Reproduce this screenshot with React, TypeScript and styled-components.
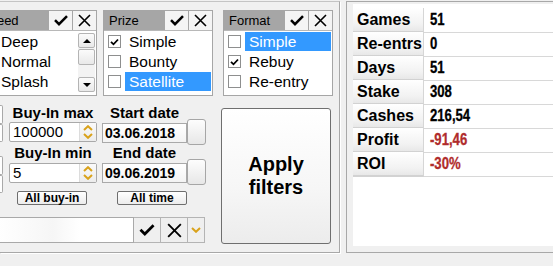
import React from 'react';
import styled, { createGlobalStyle } from 'styled-components';

const Global = createGlobalStyle`
  html, body { margin: 0; padding: 0; background: #f0f0f0; }
  body { width: 553px; height: 266px; overflow: hidden; font-family: "Liberation Sans", Arial, sans-serif; color: #000; }
`;

const Window = styled.div`
  display: flex;
  align-items: flex-start;
  width: 553px;
  height: 266px;
  overflow: hidden;
  background: #f0f0f0;
`;

const LeftGroup = styled.div`
  flex: none;
  box-sizing: border-box;
  width: 340px;
  height: 252px;
  margin-top: 1px;
  border-top: 1px solid #c4c4c4;
  border-right: 1px solid #a8a8a8;
  border-bottom: 1px solid #a8a8a8;
  box-shadow: 1px 1px 0 #fff;
  padding-top: 8px;
  display: flex;
  flex-direction: column;
`;

const TopRow = styled.div`
  display: flex;
  align-items: flex-start;
`;

const ListBox = styled.div<{ $w: number; $ml: number }>`
  flex: none;
  box-sizing: border-box;
  width: ${p => p.$w}px;
  height: 86px;
  margin-left: ${p => p.$ml}px;
  border: 1px solid #a6a6a6;
  background: #fff;
  display: flex;
  flex-direction: column;
`;

const BoxHeader = styled.div`
  display: flex;
  height: 19px;
  border-bottom: 1px solid #b8b8b8;
`;

const BoxTitle = styled.div`
  flex: 1;
  background: #a6a6a6;
  font-size: 13px;
  line-height: 19px;
  padding-left: 5px;
  white-space: nowrap;
  overflow: hidden;
`;

const HeaderBtn = styled.div`
  width: 24px;
  box-sizing: border-box;
  border-left: 1px solid #a6a6a6;
  background: #f4f4f4;
  display: flex;
  align-items: center;
  justify-content: center;
`;

const ListBody = styled.div`
  flex: 1;
  display: flex;
`;

const Items = styled.div`
  flex: 1;
  display: flex;
  flex-direction: column;
  min-width: 0;
`;

const Item = styled.div`
  height: 20px;
  display: flex;
  align-items: flex-start;
`;

const CheckBox = styled.div`
  flex: none;
  box-sizing: border-box;
  width: 13px;
  height: 13px;
  margin: 4px 0 0 4px;
  border: 1px solid #8e8f8f;
  background: #fff;
  display: flex;
  align-items: center;
  justify-content: center;
`;

const ItemLabel = styled.div<{ $sel?: boolean }>`
  flex: 1;
  height: 19px;
  margin: 1px 1px 0 4px;
  padding-left: 4px;
  font-size: 15.5px;
  line-height: 19px;
  white-space: nowrap;
  background: ${p => (p.$sel ? '#3399ff' : 'transparent')};
  color: ${p => (p.$sel ? '#fff' : '#000')};
`;

const ScrollBar = styled.div`
  flex: none;
  width: 17px;
  margin: 2px 1px 3px 0;
  display: flex;
  flex-direction: column;
  background: #f3f3f3;
`;

const ScrollBtn = styled.div<{ $h: number; $mt?: number }>`
  box-sizing: border-box;
  height: ${p => p.$h}px;
  margin-top: ${p => p.$mt ?? 0}px;
  border: 1px solid #b4b4b4;
  border-radius: 2px;
  background: linear-gradient(#fbfbfb, #e9e9e9);
  display: flex;
  align-items: center;
  justify-content: center;
`;

const Triangle = styled.div<{ $up?: boolean }>`
  width: 0;
  height: 0;
  border-left: 4px solid transparent;
  border-right: 4px solid transparent;
  ${p => (p.$up ? 'border-bottom: 4px solid #000;' : 'border-top: 4px solid #000;')}
`;

const Spacer = styled.div`
  flex: 1;
`;

const Lower = styled.div`
  display: flex;
  align-items: flex-start;
  margin-top: 8px;
`;

const LeftStack = styled.div`
  display: flex;
  flex-direction: column;
`;

const MidRow = styled.div`
  display: flex;
  align-items: flex-start;
`;

const EdgeColumn = styled.div`
  width: 3px;
  display: flex;
  flex-direction: column;
`;

const EdgeBox = styled.div<{ $h: number; $mt: number }>`
  box-sizing: border-box;
  height: ${p => p.$h}px;
  margin-top: ${p => p.$mt}px;
  border: 1px solid #a9a9a9;
  border-left: none;
  border-radius: 0 2px 2px 0;
  background: #fff;
`;

const Column = styled.div<{ $w: number; $ml: number }>`
  width: ${p => p.$w}px;
  margin-left: ${p => p.$ml}px;
  display: flex;
  flex-direction: column;
`;

const FieldLabel = styled.div<{ $w?: number; $mt?: number }>`
  width: ${p => (p.$w ? `${p.$w}px` : 'auto')};
  height: 17px;
  margin-top: ${p => p.$mt ?? 0}px;
  font-size: 15px;
  font-weight: 700;
  line-height: 17px;
  text-align: center;
  white-space: nowrap;
`;

const SpinBox = styled.div<{ $mt: number }>`
  box-sizing: border-box;
  height: 20px;
  margin-top: ${p => p.$mt}px;
  border: 1px solid #a9a9a9;
  border-radius: 2px;
  background: #fff;
  display: flex;
`;

const SpinText = styled.div`
  flex: 1;
  padding-left: 3px;
  font-size: 15px;
  line-height: 18px;
`;

const SpinArrows = styled.div`
  width: 16px;
  border-left: 1px solid #dcdcdc;
  background: linear-gradient(#fafafa, #ececec);
  display: flex;
  flex-direction: column;
  align-items: center;
  justify-content: center;
  gap: 2px;
`;

const DateRow = styled.div<{ $mt: number }>`
  display: flex;
  align-items: flex-start;
  height: 20px;
  margin-top: ${p => p.$mt}px;
`;

const DateInput = styled.div`
  box-sizing: border-box;
  width: 85px;
  height: 20px;
  border: 1px solid #a9a9a9;
  background: linear-gradient(#ffffff, #f3f3f3);
  padding-left: 2px;
  font-size: 14px;
  font-weight: 700;
  line-height: 18px;
`;

const DateButton = styled.div`
  box-sizing: border-box;
  width: 19px;
  height: 26px;
  margin-top: -4px;
  border: 1px solid #a6a6a6;
  border-radius: 3px;
  background: linear-gradient(#fdfdfd, #e7e7e7);
`;

const SmallButton = styled.div<{ $w: number; $ml: number }>`
  box-sizing: border-box;
  width: ${p => p.$w}px;
  height: 14px;
  margin: 8px 0 0 ${p => p.$ml}px;
  border: 1px solid #6e6e6e;
  border-radius: 2px;
  background: linear-gradient(#ffffff, #ececec);
  font-size: 12px;
  font-weight: 700;
  line-height: 12px;
  text-align: center;
`;

const BottomRow = styled.div`
  display: flex;
  height: 26px;
  margin-top: 12px;
  margin-left: -2px;
`;

const SearchInput = styled.div`
  box-sizing: border-box;
  width: 136px;
  border: 1px solid #a9a9a9;
  background: linear-gradient(90deg, #ffffff 0%, #f6f6f6 40%, #ffffff 60%, #ffffff 100%);
`;

const RowBtn = styled.div<{ $w: number }>`
  box-sizing: border-box;
  width: ${p => p.$w}px;
  border: 1px solid #b4b4b4;
  border-left: none;
  background: #efefef;
  display: flex;
  align-items: center;
  justify-content: center;
`;

const ApplyButton = styled.div`
  box-sizing: border-box;
  width: 110px;
  height: 136px;
  margin: 4px 0 0 15px;
  border: 1px solid #6f6f6f;
  border-radius: 3px;
  background: linear-gradient(#ffffff, #f6f6f6 60%, #ececec);
  display: flex;
  align-items: center;
  justify-content: center;
  text-align: center;
  font-size: 20px;
  font-weight: 700;
  line-height: 23px;
`;

const RightGroup = styled.div`
  flex: none;
  box-sizing: border-box;
  width: 220px;
  height: 252px;
  margin: 1px 0 0 6px;
  border: 1px solid #a8a8a8;
  padding: 2px 0 6px 6px;
  display: flex;
`;

const StatsPanel = styled.div`
  flex: 1;
  background: #fff;
  padding-top: 4px;
  display: flex;
  flex-direction: column;
`;

const StatRow = styled.div`
  display: grid;
  grid-template-columns: 71px 1fr;
  height: 24px;
`;

const StatLabel = styled.div`
  box-sizing: border-box;
  border-right: 1px solid #d6d6d6;
  border-bottom: 2px solid #d2d2d2;
  background: linear-gradient(#ffffff, #f2f2f2 70%, #e8e8e8);
  padding-left: 4px;
  font-size: 16px;
  font-weight: 700;
  line-height: 23px;
  white-space: nowrap;
`;

const StatValue = styled.div<{ $neg?: boolean }>`
  box-sizing: border-box;
  border-bottom: 1px solid #d8d8d8;
  padding-left: 6px;
  font-size: 16px;
  font-weight: 700;
  line-height: 23px;
  color: ${p => (p.$neg ? '#b02b2b' : '#000')};
`;

const Narrow = styled.span`
  display: inline-block;
  transform: scaleX(0.82);
  transform-origin: left center;
  -webkit-text-stroke: 0.3px currentColor;
`;

const CheckIcon = ({ w = 14, h = 11 }: { w?: number; h?: number }) => (
  <svg width={w} height={h} viewBox="0 0 14 11">
    <polyline points="1,5.2 5,9.2 13,1.2" fill="none" stroke="#000" strokeWidth="2.5" />
  </svg>
);

const XIcon = ({ s = 13 }: { s?: number }) => (
  <svg width={s} height={s} viewBox="0 0 13 13">
    <path d="M1 1 L12 12 M12 1 L1 12" stroke="#000" strokeWidth="1.6" fill="none" />
  </svg>
);

const MiniCheck = () => (
  <svg width="9" height="8" viewBox="0 0 9 8">
    <polyline points="1,3.8 3.5,6.3 8,1.5" fill="none" stroke="#000" strokeWidth="1.8" />
  </svg>
);

const Chevron = ({ up }: { up?: boolean }) => (
  <svg width="10" height="6" viewBox="0 0 10 6">
    <polyline points={up ? '1,5 5,1.2 9,5' : '1,1 5,4.8 9,1'} fill="none" stroke="#d9a21b" strokeWidth="2" />
  </svg>
);

type Opt = { label: string; checked?: boolean; sel?: boolean };

const FilterList = ({ title, w, ml, opts, scroll }: { title: string; w: number; ml: number; opts: Opt[]; scroll?: boolean }) => (
  <ListBox $w={w} $ml={ml}>
    <BoxHeader>
      <BoxTitle>{title}</BoxTitle>
      <HeaderBtn><CheckIcon /></HeaderBtn>
      <HeaderBtn><XIcon /></HeaderBtn>
    </BoxHeader>
    <ListBody>
      <Items>
        {opts.map(o => (
          <Item key={o.label}>
            <CheckBox>{o.checked && <MiniCheck />}</CheckBox>
            <ItemLabel $sel={o.sel}>{o.label}</ItemLabel>
          </Item>
        ))}
      </Items>
      {scroll && (
        <ScrollBar>
          <ScrollBtn $h={15}><Triangle $up /></ScrollBtn>
          <ScrollBtn $h={16} $mt={1} />
          <Spacer />
          <ScrollBtn $h={15}><Triangle /></ScrollBtn>
        </ScrollBar>
      )}
    </ListBody>
  </ListBox>
);

const Spin = ({ value, mt }: { value: string; mt: number }) => (
  <SpinBox $mt={mt}>
    <SpinText>{value}</SpinText>
    <SpinArrows>
      <Chevron up />
      <Chevron />
    </SpinArrows>
  </SpinBox>
);

const stats: { k: string; v: string; neg?: boolean }[] = [
  { k: 'Games', v: '51' },
  { k: 'Re-entrs', v: '0' },
  { k: 'Days', v: '51' },
  { k: 'Stake', v: '308' },
  { k: 'Cashes', v: '216,54' },
  { k: 'Profit', v: '-91,46', neg: true },
  { k: 'ROI', v: '-30%', neg: true },
];

export default function App() {
  return (
    <Window>
      <Global />
      <LeftGroup>
        <TopRow>
          <FilterList
            title="Speed"
            w={122}
            ml={-25}
            scroll
            opts={[{ label: 'Deep' }, { label: 'Normal' }, { label: 'Splash' }]}
          />
          <FilterList
            title="Prize"
            w={110}
            ml={6}
            opts={[{ label: 'Simple', checked: true }, { label: 'Bounty' }, { label: 'Satellite', sel: true }]}
          />
          <FilterList
            title="Format"
            w={110}
            ml={10}
            opts={[{ label: 'Simple', sel: true }, { label: 'Rebuy', checked: true }, { label: 'Re-entry' }]}
          />
        </TopRow>
        <Lower>
          <LeftStack>
            <MidRow>
              <EdgeColumn>
                <EdgeBox $h={19} $mt={1} />
                <EdgeBox $h={18} $mt={0} />
                <EdgeBox $h={19} $mt={14} />
                <EdgeBox $h={18} $mt={0} />
              </EdgeColumn>
              <Column $w={88} $ml={6}>
                <FieldLabel>Buy-In max</FieldLabel>
                <Spin value="100000" mt={1} />
                <FieldLabel $mt={2}>Buy-In min</FieldLabel>
                <Spin value="5" mt={2} />
                <SmallButton $w={70} $ml={8}>All buy-in</SmallButton>
              </Column>
              <Column $w={104} $ml={5}>
                <FieldLabel $w={85}>Start date</FieldLabel>
                <DateRow $mt={2}>
                  <DateInput>03.06.2018</DateInput>
                  <DateButton />
                </DateRow>
                <FieldLabel $w={85} $mt={1}>End date</FieldLabel>
                <DateRow $mt={2}>
                  <DateInput>09.06.2019</DateInput>
                  <DateButton />
                </DateRow>
                <SmallButton $w={70} $ml={15}>All time</SmallButton>
              </Column>
            </MidRow>
            <BottomRow>
              <SearchInput />
              <RowBtn $w={27}><CheckIcon w={16} h={12} /></RowBtn>
              <RowBtn $w={27}><XIcon s={15} /></RowBtn>
              <RowBtn $w={17}><Chevron /></RowBtn>
            </BottomRow>
          </LeftStack>
          <ApplyButton>Apply<br />filters</ApplyButton>
        </Lower>
      </LeftGroup>
      <RightGroup>
        <StatsPanel>
          {stats.map(s => (
            <StatRow key={s.k}>
              <StatLabel>{s.k}</StatLabel>
              <StatValue $neg={s.neg}><Narrow>{s.v}</Narrow></StatValue>
            </StatRow>
          ))}
        </StatsPanel>
      </RightGroup>
    </Window>
  );
}
